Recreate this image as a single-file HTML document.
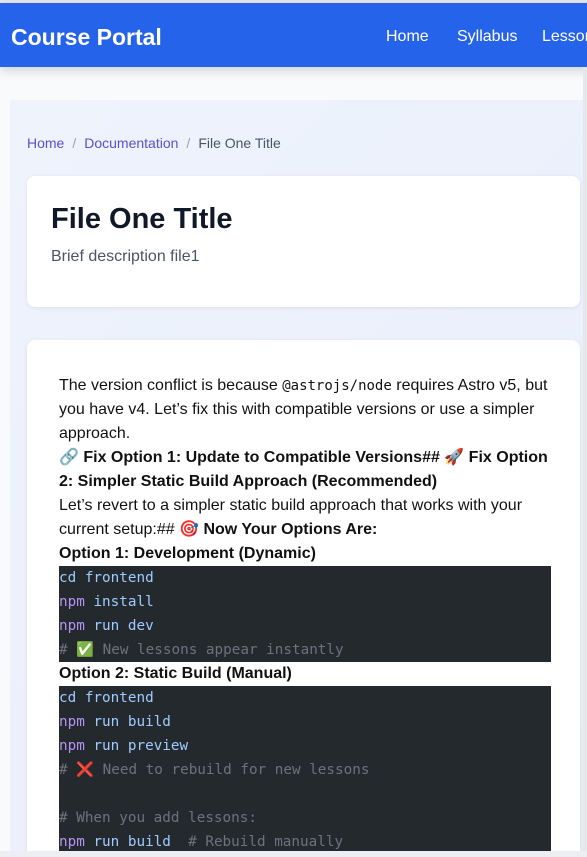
<!DOCTYPE html>
<html><head><meta charset="utf-8"><style>
*{box-sizing:border-box;margin:0;padding:0}
html,body{width:587px;height:857px;overflow:hidden;background:#f8fafc;font-family:"Liberation Sans","DejaVu Sans",sans-serif}
#w{position:relative;width:587px;height:857px;overflow:hidden}
.top{position:absolute;left:0;top:0;width:587px;height:3px;background:#e5e7eb}
header{position:absolute;left:0;top:3px;width:600px;height:64px;background:#2563eb;box-shadow:0 4px 10px rgba(0,0,0,.15);color:#fff}
header .logo{position:absolute;left:11px;top:21px;font-size:23px;font-weight:bold}
header .nav{position:absolute;top:25px;font-size:16px}
.panel{position:absolute;left:10px;top:100px;width:600px;height:760px;background:linear-gradient(135deg,#eef3fc,#e8eefc)}
.bc{position:absolute;left:27px;top:135px;font-size:14px;color:#475569}
.bc a{color:#5b4fd6}
.bc .s{color:#9ca3af;margin:0 8px}
.card{position:absolute;left:27px;width:553px;background:#fff;border-radius:8px;box-shadow:0 1px 4px rgba(0,0,0,.08)}
h1{position:absolute;left:24px;top:27px;font-size:29px;color:#111827}
.desc{position:absolute;left:24px;top:72px;font-size:16px;color:#4b5563}
.content{position:absolute;left:32px;top:34px;width:492px;font-size:16px;line-height:24px;color:#111}
.content code{font-family:"DejaVu Sans Mono",monospace;font-size:14px}
pre{background:#24292e;font-family:"DejaVu Sans Mono",monospace;font-size:14.3px;line-height:24px;color:#c9d1d9;height:96px}
.k{color:#b392f0}.b{color:#9ecbff}.c{color:#6a737d}
.sb{position:absolute;left:0;top:851px;width:587px;height:6px;background:#eceef1}
.sv{position:absolute;left:583px;top:67px;width:4px;height:790px;background:#e5e7eb}
</style></head><body><div id="w">
<div class="top"></div>
<div class="panel"></div>
<header><div class="logo">Course Portal</div>
<div class="nav" style="left:386px">Home</div>
<div class="nav" style="left:457px">Syllabus</div>
<div class="nav" style="left:542px">Lessons</div></header>
<div class="bc"><a>Home</a><span class="s">/</span><a>Documentation</a><span class="s">/</span>File One Title</div>
<div class="card" style="top:176px;height:131px"><h1>File One Title</h1><div class="desc">Brief description file1</div></div>
<div class="card" style="top:340px;height:540px">
<div class="content">
The version conflict is because <code>@astrojs/node</code> requires Astro v5, but you have v4. Let’s fix this with compatible versions or use a simpler approach.<br>
<b>🔗 Fix Option 1: Update to Compatible Versions## 🚀 Fix Option 2: Simpler Static Build Approach (Recommended)</b><br>
Let’s revert to a simpler static build approach that works with your current setup:## <b>🎯 Now Your Options Are:</b><br>
<b>Option 1: Development (Dynamic)</b>
<pre><span class="b">cd frontend</span>
<span class="k">npm</span> <span class="b">install</span>
<span class="k">npm</span> <span class="b">run dev</span>
<span class="c"># ✅ New lessons appear instantly</span></pre>
<b>Option 2: Static Build (Manual)</b>
<pre style="height:200px"><span class="b">cd frontend</span>
<span class="k">npm</span> <span class="b">run build</span>
<span class="k">npm</span> <span class="b">run preview</span>
<span class="c"># ❌ Need to rebuild for new lessons</span>

<span class="c"># When you add lessons:</span>
<span class="k">npm</span> <span class="b">run build</span>  <span class="c"># Rebuild manually</span></pre>
</div></div>
<div class="sv"></div>
<div class="sb"></div>
</div></body></html>
